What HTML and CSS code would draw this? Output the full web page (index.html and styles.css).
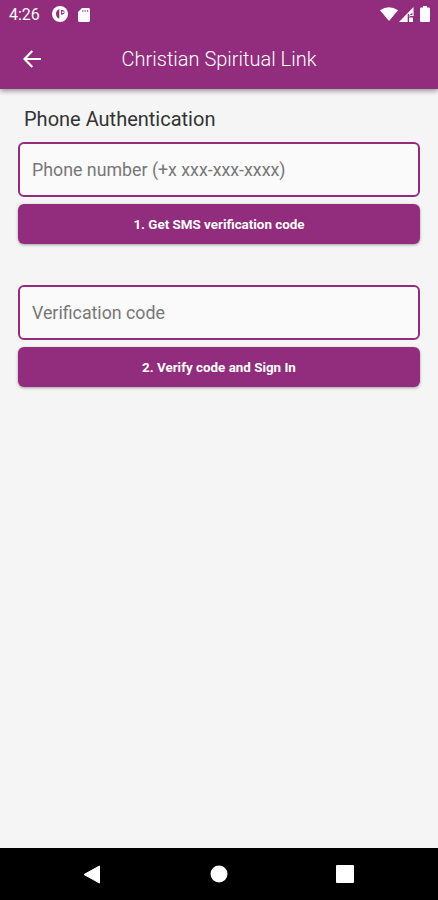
FILE: index.html
```
<!DOCTYPE html>
<html lang="en">
<head>
<meta charset="utf-8">
<title>Christian Spiritual Link</title>
<link rel="stylesheet" href="styles.css">
</head>
<body>
<div class="screen">
  <header class="top">
    <div class="status">
      <span class="time">4:26</span>
      <svg class="app-icon" width="16" height="16" viewBox="0 0 16 16"><circle cx="8" cy="8" r="8" fill="#fff"/><path d="M7.300 3v9.800Q4.200 11.500 4 8t3.300-5zM9 4h1.600q2 .3 2 2.200t-2 2.200H9z" fill="#922c7c"/><circle cx="10.800" cy="6.200" r="1" fill="#fff"/></svg>
      <svg class="sd-icon" width="12" height="14" viewBox="0 0 12 14"><path d="M4 0h6.600Q12 0 12 1.400v11.200Q12 14 10.600 14H1.400Q0 14 0 12.600V4z" fill="#fff"/><path d="M4.300 2h1.200v2H4.300zM6.600 2h1.200v2H6.600zM8.900 2h1.200v2H8.900z" fill="#922c7c" opacity=".65"/></svg>
      <div class="signals">
        <svg width="18" height="14" viewBox="0 0 18 14"><path d="M0 3.300Q9-3 18 3.300L9 14z" fill="#fff"/></svg>
        <svg width="15" height="15" viewBox="0 0 15 15"><path d="M0 15 14.500 0v5l-4 3v2H9v5z" fill="#fff"/><path d="M10 10.500h4V15h-4z" fill="#fff"/><path d="M11 8.500h3V5" fill="none" stroke="#fff" stroke-width="1.200"/><path d="M9.300 7v8" stroke="#922c7c" stroke-width="1.200"/></svg>
        <svg class="battery" width="10" height="16" viewBox="0 0 10 16"><path d="M3 0h4v1.500h1.700Q10 1.500 10 2.800v11.900Q10 16 8.700 16H1.300Q0 16 0 14.700V2.800Q0 1.500 1.300 1.500H3z" fill="#fff"/></svg>
      </div>
    </div>
    <div class="appbar">
      <svg class="back" width="18" height="18" viewBox="0 0 18 18"><path d="M18 9H1.800M9.300 1 1.500 9l7.800 8" fill="none" stroke="#fff" stroke-width="2.200"/></svg>
      <h1 class="title">Christian Spiritual Link</h1>
    </div>
  </header>
  <main class="content">
    <h2 class="heading">Phone Authentication</h2>
    <input class="field" type="tel" placeholder="Phone number (+x xxx-xxx-xxxx)">
    <button class="action">1. Get SMS verification code</button>
    <input class="field second" type="text" placeholder="Verification code">
    <button class="action">2. Verify code and Sign In</button>
  </main>
  <nav class="nav">
    <svg width="18" height="19" viewBox="0 0 18 19"><path d="M1 9.500 16.500 1v17z" fill="#fff" stroke="#fff" stroke-linejoin="round"/></svg>
    <svg width="18" height="18" viewBox="0 0 18 18"><circle cx="9" cy="9" r="8.500" fill="#fff"/></svg>
    <svg width="18" height="18" viewBox="0 0 18 18"><rect width="18" height="18" rx="1" fill="#fff"/></svg>
  </nav>
</div>
</body>
</html>
```
FILE: styles.css
```
* { box-sizing: border-box; }
body { margin: 0; font-family: Roboto, sans-serif; }
svg { display: block; flex: none; }
.screen { width: 438px; height: 900px; display: flex; flex-direction: column; background: #f5f5f5; overflow: hidden; }
.top { height: 89px; flex: none; background: #922c7c; color: #fff; box-shadow: 0 2px 5px rgba(0, 0, 0, .4); }
.status { height: 29px; display: flex; align-items: center; padding: 0 8px 0 9px; }
.time { width: 43px; font-size: 16px; line-height: 29px; white-space: nowrap; }
.app-icon { margin-top: -1px; }
.sd-icon { margin-left: 10px; }
.signals { margin-left: auto; display: flex; align-items: center; gap: 1px; }
.signals svg:first-child { margin-top: -2px; }
.battery { margin-left: 5px; margin-top: -1px; }
.appbar { height: 60px; display: flex; align-items: center; justify-content: center; padding: 0 23px; }
.back { margin-right: auto; }
.title { margin: 0 auto 0 0; padding-right: 18px; font-size: 20px; line-height: 28px; font-weight: 300; color: #fff; white-space: nowrap; }
.content { flex: 1; display: flex; flex-direction: column; padding: 16px 18px 0; }
.heading { margin: 0 0 9px 6px; font-size: 20px; line-height: 28px; font-weight: 400; color: #333; }
.field { width: 100%; height: 55px; padding: 0 12px; border: 2px solid #922c7c; border-radius: 6px; background: #fafafa; font: 400 17.800px Roboto, sans-serif; color: #333; outline: 0; }
.field::placeholder { color: #777; opacity: 1; }
.action { width: 100%; height: 40px; margin-top: 7px; padding: 0; border: 0; border-radius: 6px; background: #922c7c; color: #fff; font: 700 13.400px Roboto, sans-serif; box-shadow: 0 1px 3px rgba(0, 0, 0, .35); }
.second { margin-top: 41px; }
.nav { height: 52px; flex: none; background: #000; display: flex; align-items: center; justify-content: space-between; padding: 0 84px 0 83px; }
```
